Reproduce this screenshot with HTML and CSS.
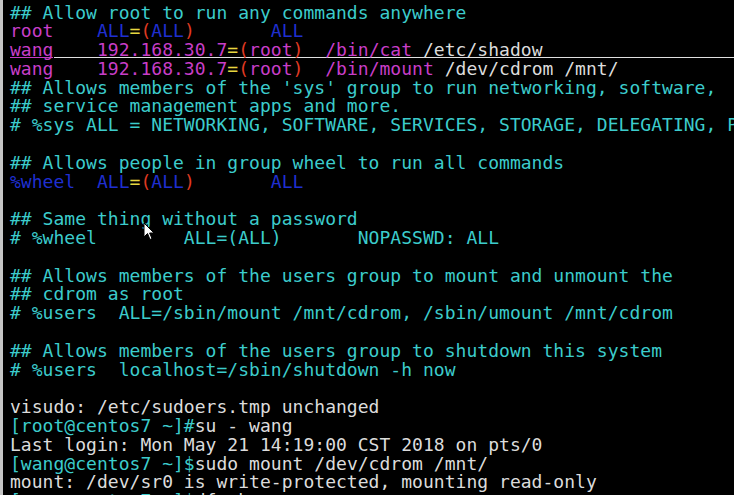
FILE: index.html
```html
<!DOCTYPE html>
<html lang="en">

<head>
    <meta charset="UTF-8">
    <title>sudoers</title>
    <link rel="stylesheet" href="styles.css">
</head>

<body>
    <div class="term">
        <div class="line c">## Allow root to run any commands anywhere</div>
        <div class="line"><span class="m">root</span>    <span class="b">ALL</span><span class="y">=</span><span class="r">(</span><span class="b">ALL</span><span class="r">)</span>       <span class="b">ALL</span></div>
        <div class="line cursorline"><span class="m">wang    192.168.30.7</span><span class="y">=</span><span class="r">(</span><span class="m">root</span><span class="r">)</span>  <span class="m">/bin/cat</span> <span class="w">/etc/shadow</span></div>
        <div class="line"><span class="m">wang    192.168.30.7</span><span class="y">=</span><span class="r">(</span><span class="m">root</span><span class="r">)</span>  <span class="m">/bin/mount</span> <span class="w">/dev/cdrom /mnt/</span></div>
        <div class="line c">## Allows members of the 'sys' group to run networking, software,</div>
        <div class="line c">## service management apps and more.</div>
        <div class="line c"># %sys ALL = NETWORKING, SOFTWARE, SERVICES, STORAGE, DELEGATING, PROCESSES, LOCATE, DRIVERS</div>
        <div class="line"></div>
        <div class="line c">## Allows people in group wheel to run all commands</div>
        <div class="line"><span class="b">%wheel  ALL</span><span class="y">=</span><span class="r">(</span><span class="b">ALL</span><span class="r">)</span>       <span class="b">ALL</span></div>
        <div class="line"></div>
        <div class="line c">## Same thing without a password</div>
        <div class="line c"># %wheel        ALL=(ALL)       NOPASSWD: ALL</div>
        <div class="line"></div>
        <div class="line c">## Allows members of the users group to mount and unmount the</div>
        <div class="line c">## cdrom as root</div>
        <div class="line c"># %users  ALL=/sbin/mount /mnt/cdrom, /sbin/umount /mnt/cdrom</div>
        <div class="line"></div>
        <div class="line c">## Allows members of the users group to shutdown this system</div>
        <div class="line c"># %users  localhost=/sbin/shutdown -h now</div>
        <div class="line"></div>
        <div class="line w">visudo: /etc/sudoers.tmp unchanged</div>
        <div class="line"><span class="c">[root@centos7 ~]#</span><span class="w">su - wang</span></div>
        <div class="line w">Last login: Mon May 21 14:19:00 CST 2018 on pts/0</div>
        <div class="line"><span class="c">[wang@centos7 ~]$</span><span class="w">sudo mount /dev/cdrom /mnt/</span></div>
        <div class="line w">mount: /dev/sr0 is write-protected, mounting read-only</div>
        <div class="line"><span class="c">[wang@centos7 ~]$</span><span class="w">df -h</span></div>
    </div>

    <!-- mouse pointer -->
    <svg class="pointer" width="13" height="20" viewBox="0 0 13 20">
        <path d="M1 1 L1 15 L4.5 11.5 L7 17.5 L9 16.6 L6.6 11 L11 11 Z" fill="#fff" stroke="#000" stroke-width="1"/>
    </svg>
</body>

</html>
```

FILE: styles.css
```css
html,
body {
    margin: 0;
    height: 100%;
    overflow: hidden;
    background-color: #000;
}

body {
    position: relative;
    border-left: 3px solid #c6c6c6;
}

.term {
    padding: 3.5px 0 0 7px;
    overflow: hidden;
    font-family: "DejaVu Sans Mono", monospace;
    font-size: 18px;
    letter-spacing: 0.03px;
    color: #dcdcdc;
}

.line {
    height: 18.8px;
    line-height: 18.8px;
    white-space: pre;
}

/* vim cursorline underline */
.cursorline {
    background:
        linear-gradient(#c43cc4, #c43cc4) left 0 bottom 2px / 43px 1px no-repeat,
        linear-gradient(#e0e0e0, #e0e0e0) right 0 bottom 2px / calc(100% - 44px) 1px no-repeat;
}

.c {
    color: #3ccccc;
}

.m {
    color: #c83ec8;
}

.b {
    color: #1f2fd0;
}

.r {
    color: #e03a22;
}

.y {
    color: #e6d640;
}

.w {
    color: #dcdcdc;
}

.pointer {
    position: absolute;
    left: 140px;
    top: 222px;
}
```
